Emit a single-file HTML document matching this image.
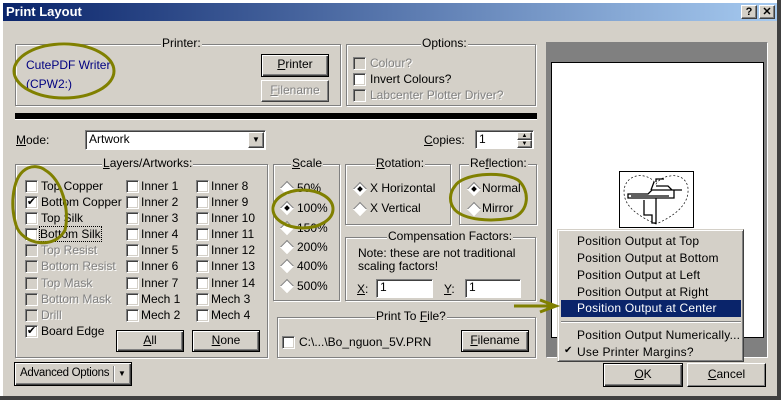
<!DOCTYPE html><html><head><style>
*{margin:0;padding:0;box-sizing:border-box}
body{width:781px;height:400px;background:#d4d0c8;font-family:"Liberation Sans",sans-serif;font-size:11px;color:#000;position:relative;overflow:hidden}
.a{position:absolute;white-space:nowrap}
.grp{position:absolute;border:1px solid #808080;box-shadow:1px 1px 0 #fff, inset 1px 1px 0 #fff}
.gl{position:absolute;top:-8px;background:#d4d0c8;padding:0 1px;line-height:13px;font-size:12px}
.btn{position:absolute;background:#d4d0c8;border:1px solid;border-color:#fff #404040 #404040 #fff;box-shadow:inset -1px -1px 0 #808080;text-align:center;line-height:19px}
.btnd{border:1px solid #000;box-shadow:inset 1px 1px 0 #fff,inset -1px -1px 0 #404040,inset -2px -2px 0 #808080}
.cb{position:absolute;width:13px;height:13px;background:#fff;border:1px solid;border-color:#808080 #fff #fff #808080;box-shadow:inset 1px 1px 0 #404040,inset -1px -1px 0 #d4d0c8}
.cb.d{background:#d4d0c8}
.dis{color:#808080;text-shadow:1px 1px 0 #fff}
.rd{position:absolute;width:10px;height:10px;background:#fff;border:1px solid;border-color:#808080 #fff #fff #808080;transform:rotate(45deg)}
.rd.on::after{content:"";position:absolute;left:2px;top:2px;width:4px;height:4px;background:#000}
.ed{position:absolute;background:#fff;border:1px solid;border-color:#808080 #fff #fff #808080;box-shadow:inset 1px 1px 0 #404040;padding-left:3px;line-height:15px;font-size:12px}
u{text-decoration:underline}
.mi{position:absolute;left:19px;font-size:12px;letter-spacing:0.2px}
</style></head><body>
<div class="a" style="left:0;top:0;width:781px;height:3px;background:#fff"></div>
<div class="a" style="left:3px;top:3px;width:774px;height:18px;background:linear-gradient(90deg,#0a246a,#a6caf0)"></div>
<div class="a" style="left:6px;top:3px;color:#fff;font-weight:bold;font-size:13px;line-height:17px">Print Layout</div>
<div class="btn" style="left:741px;top:5px;width:16px;height:14px;line-height:12px;font-weight:bold;font-size:11px">?</div>
<div class="btn" style="left:759px;top:5px;width:16px;height:14px;line-height:12px;font-weight:bold;font-size:11px">✕</div>
<div class="a" style="left:777px;top:0;width:4px;height:400px;background:#404040"></div>
<div class="a" style="left:0;top:396px;width:781px;height:4px;background:#404040"></div>
<div class="a" style="left:0;top:3px;width:3px;height:393px;background:#fff"></div>

<div class="grp" style="left:15px;top:44px;width:326px;height:62px"><span class="gl" style="left:145px">Printer:</span></div>
<div class="a" style="left:26px;top:58px;color:#000080;font-size:12px">CutePDF Writer</div>
<div class="a" style="left:26px;top:77px;color:#000080;font-size:12px">(CPW2:)</div>
<div class="btn btnd" style="left:261px;top:54px;width:68px;height:23px;font-size:12px"><u>P</u>rinter</div>
<div class="btn dis" style="left:261px;top:80px;width:68px;height:22px;font-size:12px"><u>F</u>ilename</div>

<div class="grp" style="left:346px;top:44px;width:190px;height:62px"><span class="gl" style="left:74px">Options:</span></div>
<div class="cb d" style="left:353px;top:57px"></div><div class="a dis" style="left:370px;top:56px;font-size:12px">Colour?</div>
<div class="cb" style="left:353px;top:73px"></div><div class="a" style="left:370px;top:72px;font-size:12px">Invert Colours?</div>
<div class="cb d" style="left:353px;top:89px"></div><div class="a dis" style="left:370px;top:88px;font-size:12px">Labcenter Plotter Driver?</div>

<div class="a" style="left:15px;top:113px;width:522px;height:7px;background:#000;border-bottom:1px solid #fff"></div>

<div class="a" style="left:16px;top:133px;font-size:12px"><u>M</u>ode:</div>
<div class="ed" style="left:85px;top:130px;width:181px;height:20px;line-height:17px">Artwork</div>
<div class="btn" style="left:248px;top:132px;width:16px;height:16px;line-height:14px;font-size:8px">▼</div>
<div class="a" style="left:424px;top:133px;font-size:12px"><u>C</u>opies:</div>
<div class="ed" style="left:475px;top:130px;width:59px;height:19px;line-height:16px">1</div>
<div class="btn" style="left:517px;top:132px;width:15px;height:8px;line-height:6px;font-size:6px">▲</div>
<div class="btn" style="left:517px;top:140px;width:15px;height:8px;line-height:6px;font-size:6px">▼</div>

<div class="a" style="left:546px;top:42px;width:222px;height:316px;background:#808080;border:1px solid;border-color:#808080 #fff #fff #808080"></div>
<div class="a" style="left:551px;top:62px;width:213px;height:276px;background:#fff;border:1px solid #000"></div>
<div class="a" style="left:619px;top:171px;width:75px;height:57px;background:#fff;border:1px solid #000">
<svg width="73" height="55" viewBox="0 0 73 55"><path d="M36 52 C20 45 4 35 4 20 C4 8 14 2 24 4 C30 5 34 9 36 12 C38 9 42 5 50 4 C62 2 69 10 68 20 C67 35 52 45 36 52Z" fill="none" stroke="#000" stroke-dasharray="2 2" stroke-width="0.7"/><path d="M8 22 h20 l4 -4 h22 v8 h-46 z M11 24 h38 M34 10 l-3 8 M36 14 h12 l4 4 h10 M36 10 v-3 h8 M24 28 v15 h8 v8 h4 v-25" fill="none" stroke="#000" stroke-width="1.3"/></svg></div>

<div class="grp" style="left:15px;top:164px;width:253px;height:194px"><span class="gl" style="left:86px"><u>L</u>ayers/Artworks:</span></div>
<div class="a" style="left:0;top:0;font-size:12px">
<div class="cb" style="left:25px;top:180px"></div><div class="a" style="left:41px;top:179px">Top Copper</div>
<div class="cb" style="left:25px;top:196px;font-size:11px;line-height:10px;text-align:center">✔</div><div class="a" style="left:41px;top:195px">Bottom Copper</div>
<div class="cb" style="left:25px;top:212px"></div><div class="a" style="left:41px;top:211px">Top Silk</div>
<div class="cb" style="left:25px;top:228px"></div><div class="a" style="left:40px;top:227px;outline:1px dotted #000">Bottom Silk</div>
<div class="cb d" style="left:25px;top:244px"></div><div class="a dis" style="left:41px;top:243px">Top Resist</div>
<div class="cb d" style="left:25px;top:260px"></div><div class="a dis" style="left:41px;top:259px">Bottom Resist</div>
<div class="cb d" style="left:25px;top:277px"></div><div class="a dis" style="left:41px;top:276px">Top Mask</div>
<div class="cb d" style="left:25px;top:293px"></div><div class="a dis" style="left:41px;top:292px">Bottom Mask</div>
<div class="cb d" style="left:25px;top:309px"></div><div class="a dis" style="left:41px;top:308px">Drill</div>
<div class="cb" style="left:25px;top:325px;font-size:11px;line-height:10px;text-align:center">✔</div><div class="a" style="left:41px;top:324px">Board Edge</div>
<div class="cb" style="left:126px;top:180px"></div><div class="a" style="left:141px;top:179px">Inner 1</div>
<div class="cb" style="left:126px;top:196px"></div><div class="a" style="left:141px;top:195px">Inner 2</div>
<div class="cb" style="left:126px;top:212px"></div><div class="a" style="left:141px;top:211px">Inner 3</div>
<div class="cb" style="left:126px;top:228px"></div><div class="a" style="left:141px;top:227px">Inner 4</div>
<div class="cb" style="left:126px;top:244px"></div><div class="a" style="left:141px;top:243px">Inner 5</div>
<div class="cb" style="left:126px;top:260px"></div><div class="a" style="left:141px;top:259px">Inner 6</div>
<div class="cb" style="left:126px;top:277px"></div><div class="a" style="left:141px;top:276px">Inner 7</div>
<div class="cb" style="left:126px;top:293px"></div><div class="a" style="left:141px;top:292px">Mech 1</div>
<div class="cb" style="left:126px;top:309px"></div><div class="a" style="left:141px;top:308px">Mech 2</div>
<div class="cb" style="left:196px;top:180px"></div><div class="a" style="left:211px;top:179px">Inner 8</div>
<div class="cb" style="left:196px;top:196px"></div><div class="a" style="left:211px;top:195px">Inner 9</div>
<div class="cb" style="left:196px;top:212px"></div><div class="a" style="left:211px;top:211px">Inner 10</div>
<div class="cb" style="left:196px;top:228px"></div><div class="a" style="left:211px;top:227px">Inner 11</div>
<div class="cb" style="left:196px;top:244px"></div><div class="a" style="left:211px;top:243px">Inner 12</div>
<div class="cb" style="left:196px;top:260px"></div><div class="a" style="left:211px;top:259px">Inner 13</div>
<div class="cb" style="left:196px;top:277px"></div><div class="a" style="left:211px;top:276px">Inner 14</div>
<div class="cb" style="left:196px;top:293px"></div><div class="a" style="left:211px;top:292px">Mech 3</div>
<div class="cb" style="left:196px;top:309px"></div><div class="a" style="left:211px;top:308px">Mech 4</div>
</div>
<div class="btn btnd" style="left:116px;top:330px;width:68px;height:22px;font-size:12px"><u>A</u>ll</div>
<div class="btn btnd" style="left:192px;top:330px;width:68px;height:22px;font-size:12px"><u>N</u>one</div>

<div class="grp" style="left:273px;top:164px;width:67px;height:137px"><span class="gl" style="left:17px"><u>S</u>cale</span></div>
<div class="a" style="font-size:12px">
<div class="rd" style="left:282px;top:183px"></div><div class="a" style="left:297px;top:181px">50%</div>
<div class="rd on" style="left:282px;top:203px"></div><div class="a" style="left:297px;top:201px">100%</div>
<div class="rd" style="left:282px;top:223px"></div><div class="a" style="left:297px;top:221px">150%</div>
<div class="rd" style="left:282px;top:242px"></div><div class="a" style="left:297px;top:240px">200%</div>
<div class="rd" style="left:282px;top:261px"></div><div class="a" style="left:297px;top:259px">400%</div>
<div class="rd" style="left:282px;top:281px"></div><div class="a" style="left:297px;top:279px">500%</div>
</div>

<div class="grp" style="left:345px;top:164px;width:106px;height:61px"><span class="gl" style="left:29px"><u>R</u>otation:</span></div>
<div class="rd on" style="left:355px;top:184px"></div><div class="a" style="left:370px;top:181px;font-size:12px">X Horizontal</div>
<div class="rd" style="left:355px;top:204px"></div><div class="a" style="left:370px;top:201px;font-size:12px">X Vertical</div>
<div class="grp" style="left:459px;top:164px;width:78px;height:61px"><span class="gl" style="left:9px">Re<u>f</u>lection:</span></div>
<div class="rd on" style="left:469px;top:184px"></div><div class="a" style="left:482px;top:181px;font-size:12px">Normal</div>
<div class="rd" style="left:469px;top:204px"></div><div class="a" style="left:482px;top:201px;font-size:12px">Mirror</div>

<div class="grp" style="left:345px;top:237px;width:191px;height:64px"><span class="gl" style="left:41px">Compensation Factors:</span></div>
<div class="a" style="left:358px;top:246px;font-size:12px">Note: these are not traditional</div>
<div class="a" style="left:358px;top:259px;font-size:12px">scaling factors!</div>
<div class="a" style="left:357px;top:282px;font-size:12px"><u>X</u>:</div>
<div class="ed" style="left:376px;top:279px;width:57px;height:19px">1</div>
<div class="a" style="left:444px;top:282px;font-size:12px"><u>Y</u>:</div>
<div class="ed" style="left:465px;top:279px;width:56px;height:19px">1</div>

<div class="grp" style="left:277px;top:317px;width:259px;height:41px"><span class="gl" style="left:97px">Print To <u>F</u>ile?</span></div>
<div class="cb" style="left:282px;top:336px"></div><div class="a" style="left:299px;top:335px;font-size:12px">C:\...\Bo_nguon_5V.PRN</div>
<div class="btn btnd" style="left:461px;top:330px;width:68px;height:22px;font-size:12px"><u>F</u>ilename</div>

<div class="btn btnd" style="left:14px;top:362px;width:118px;height:24px"></div>
<div class="a" style="left:20px;top:367px;font-size:11.5px;letter-spacing:-0.3px">Advanced Options</div>
<div class="a" style="left:113px;top:366px;width:2px;height:16px;border-left:1px solid #808080;border-right:1px solid #fff"></div>
<div class="a" style="left:118px;top:369px;font-size:8px">▼</div>

<div class="btn btnd" style="left:603px;top:363px;width:80px;height:24px;font-size:12px;line-height:21px"><u>O</u>K</div>
<div class="btn" style="left:687px;top:363px;width:79px;height:24px;font-size:12px;line-height:21px;border-color:#fff #000 #000 #fff"><u>C</u>ancel</div>

<div class="a" style="left:557px;top:229px;width:187px;height:133px;background:#d4d0c8;border:1px solid;border-color:#d4d0c8 #404040 #404040 #d4d0c8;box-shadow:inset 1px 1px 0 #fff,inset -1px -1px 0 #808080">
<div class="mi" style="top:4px">Position Output at Top</div>
<div class="mi" style="top:21px">Position Output at Bottom</div>
<div class="mi" style="top:38px">Position Output at Left</div>
<div class="mi" style="top:55px">Position Output at Right</div>
<div class="a" style="left:3px;top:70px;width:180px;height:17px;background:#0a246a"></div>
<div class="mi" style="top:71px;color:#fff">Position Output at Center</div>
<div class="a" style="left:3px;top:91px;width:180px;height:2px;border-top:1px solid #808080;border-bottom:1px solid #fff"></div>
<div class="mi" style="top:98px">Position Output Numerically...</div>
<div class="a" style="left:6px;top:115px;font-size:10px">✔</div>
<div class="mi" style="top:115px">Use Printer Margins?</div>
</div>

<svg class="a" style="left:0;top:0" width="781" height="400">
<g fill="none" stroke="#808000" stroke-width="3">
<ellipse cx="64" cy="71" rx="50" ry="27"/>
<path d="M28 168 C12 175 10 205 16 225 C22 245 55 250 65 230 C70 210 62 180 45 170 C40 166 33 166 28 168Z"/>
<ellipse cx="303" cy="209" rx="30" ry="19"/>
<path d="M455 186 C462 174 500 170 518 180 C530 190 530 212 512 218 C490 222 465 220 455 210 C448 202 450 192 455 186Z"/>
<path d="M514 306 H553 M540 300 L556 306 L540 312"/>
</g></svg>
</body></html>
